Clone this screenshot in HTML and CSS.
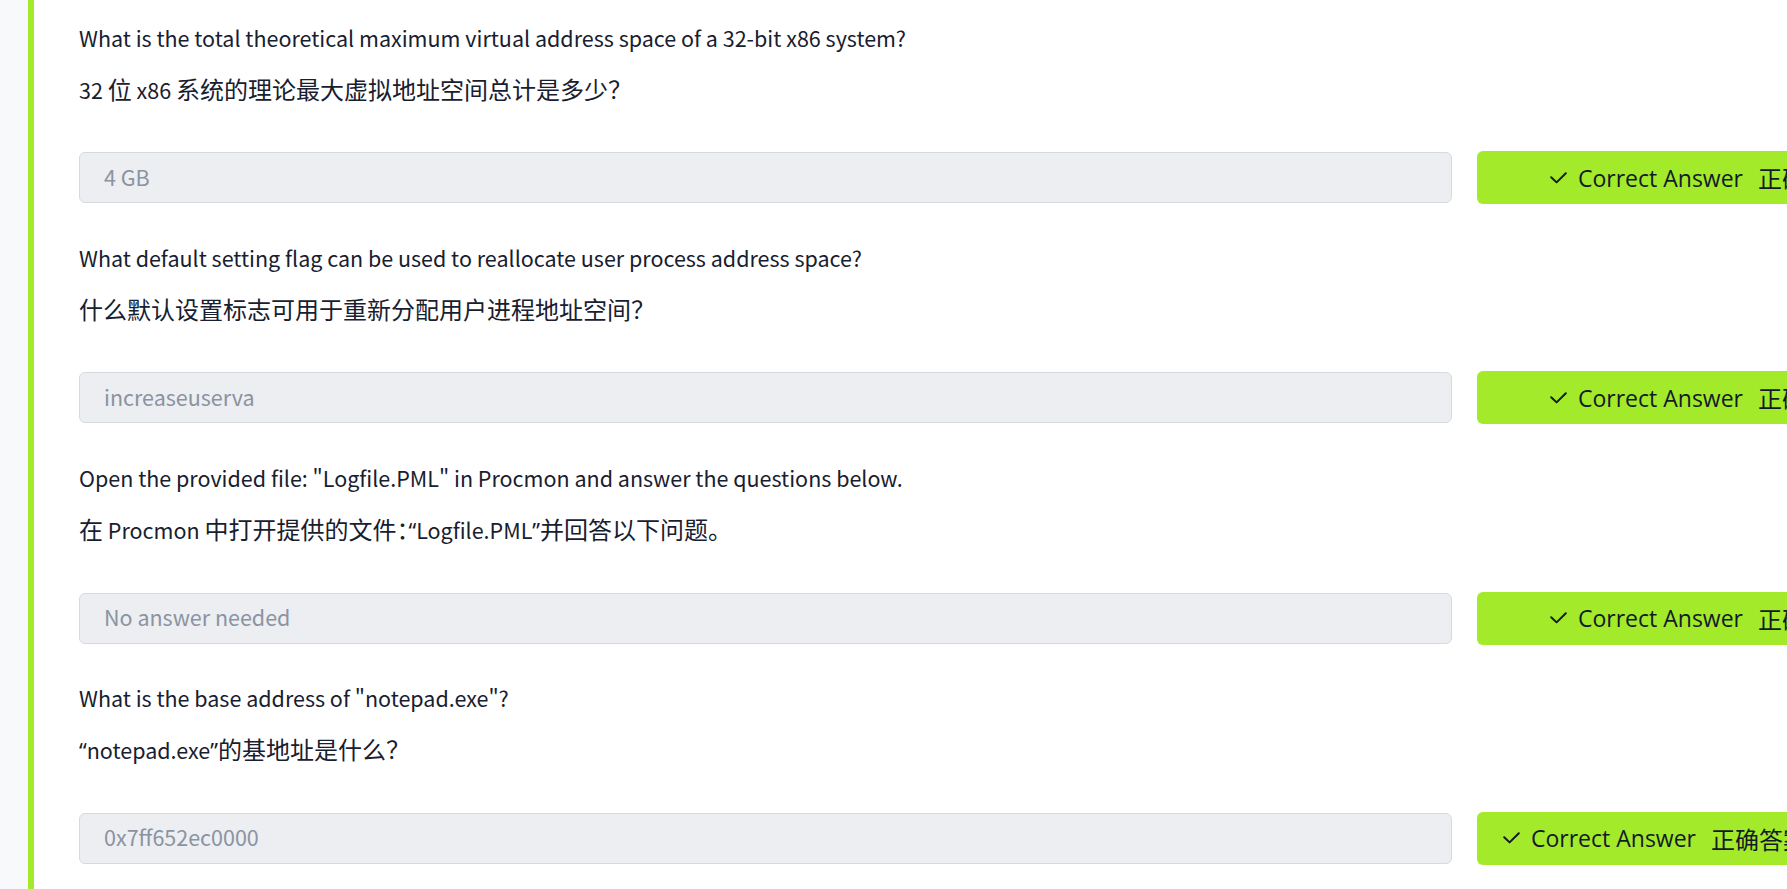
FILE: index.html
```html
<!DOCTYPE html>
<html lang="zh-CN">
<head>
<meta charset="utf-8">
<title>Tasks</title>
<link rel="stylesheet" href="styles.css">
</head>
<body>
<div class="page">
  <aside class="rail"></aside>
  <main class="tasks">
    <section class="task">
      <p class="q-en">What is the total theoretical maximum virtual address space of a 32-bit x86 system?</p>
      <p class="q-zh"><span class="lat">32 </span>位<span class="lat"> x86 </span>系统的理论最大虚拟地址空间总计是多少<span class="hw">？</span></p>
      <div class="answer-row">
        <div class="answer-field">4 GB</div>
        <div class="btn-correct">
          <svg class="check" width="17" height="12" viewBox="0 0 17 12"><path d="M1.2 5.2 L6.6 10.4 L15.8 1.2" fill="none" stroke="#141a28" stroke-width="2" stroke-linecap="round" stroke-linejoin="round"/></svg>
          <span>Correct Answer</span><span class="zh">正确答案</span>
        </div>
      </div>
    </section>
    <section class="task">
      <p class="q-en">What default setting flag can be used to reallocate user process address space?</p>
      <p class="q-zh">什么默认设置标志可用于重新分配用户进程地址空间<span class="hw">？</span></p>
      <div class="answer-row">
        <div class="answer-field">increaseuserva</div>
        <div class="btn-correct">
          <svg class="check" width="17" height="12" viewBox="0 0 17 12"><path d="M1.2 5.2 L6.6 10.4 L15.8 1.2" fill="none" stroke="#141a28" stroke-width="2" stroke-linecap="round" stroke-linejoin="round"/></svg>
          <span>Correct Answer</span><span class="zh">正确答案</span>
        </div>
      </div>
    </section>
    <section class="task">
      <p class="q-en">Open the provided file: "Logfile.PML" in Procmon and answer the questions below.</p>
      <p class="q-zh">在<span class="lat"> Procmon </span>中打开提供的文件<span class="hw">：</span><span class="pq">“</span><span class="lat">Logfile.PML</span><span class="pq">”</span>并回答以下问题。</p>
      <div class="answer-row">
        <div class="answer-field">No answer needed</div>
        <div class="btn-correct">
          <svg class="check" width="17" height="12" viewBox="0 0 17 12"><path d="M1.2 5.2 L6.6 10.4 L15.8 1.2" fill="none" stroke="#141a28" stroke-width="2" stroke-linecap="round" stroke-linejoin="round"/></svg>
          <span>Correct Answer</span><span class="zh">正确答案</span>
        </div>
      </div>
    </section>
    <section class="task">
      <p class="q-en">What is the base address of "notepad.exe"?</p>
      <p class="q-zh"><span class="pq">“</span><span class="lat">notepad.exe</span><span class="pq">”</span>的基地址是什么<span class="hw">？</span></p>
      <div class="answer-row">
        <div class="answer-field">0x7ff652ec0000</div>
        <div class="btn-correct btn-narrow">
          <svg class="check" width="17" height="12" viewBox="0 0 17 12"><path d="M1.2 5.2 L6.6 10.4 L15.8 1.2" fill="none" stroke="#141a28" stroke-width="2" stroke-linecap="round" stroke-linejoin="round"/></svg>
          <span>Correct Answer</span><span class="zh">正确答案</span>
        </div>
      </div>
    </section>
  </main>
</div>
</body>
</html>
```

FILE: styles.css
```css
html, body {
  margin: 0;
  height: 100%;
  overflow: hidden;
  background: #ffffff;
}

.page {
  display: flex;
  height: 100vh;
}

.rail {
  width: 28px;
  flex-shrink: 0;
  background: #f8f9fb;
}

.tasks {
  flex: 1;
  min-width: 0;
  overflow: hidden;
  border-left: 6px solid #a3ea2a;
  padding: 19.5px 0 0 45px;
  display: flex;
  flex-direction: column;
  gap: 35.83px;
}

.task {
  display: flex;
  flex-direction: column;
}

.task p {
  margin: 0;
  font-family: "Noto Sans CJK SC", sans-serif;
  line-height: 36px;
  color: #18202f;
  white-space: nowrap;
}

.task .q-en {
  font-size: 21.5px;
}

.task .q-zh {
  margin-top: 15px;
  height: 37px;
  font-size: 24px;
}

.lat {
  font-size: 21.5px;
  line-height: 1;
}

.pq {
  font-family: "Noto Sans", sans-serif;
  font-size: 21.5px;
  line-height: 1;
}

.hw {
  font-feature-settings: "halt" 1;
}

.answer-row {
  margin-top: 43.5px;
  height: 53px;
  display: grid;
  grid-template-columns: 1373px 360px;
  column-gap: 25px;
  align-items: center;
}

.answer-field {
  height: 51px;
  box-sizing: border-box;
  border: 1px solid #d5d9e0;
  border-radius: 6px;
  background: #eceef2;
  padding: 0 24px 3px;
  display: flex;
  align-items: center;
  font-family: "Noto Sans CJK SC", sans-serif;
  font-size: 21.5px;
  color: #8b93a1;
}

.btn-correct {
  height: 53px;
  box-sizing: border-box;
  border-radius: 6px;
  background: #a3ea2a;
  display: flex;
  align-items: center;
  padding-left: 73px;
  font-family: "Open Sans", sans-serif;
  font-size: 23px;
  color: #141a28;
  white-space: nowrap;
}

.btn-narrow {
  padding-left: 26px;
}

.btn-correct .check {
  flex-shrink: 0;
  margin-right: 11px;
}

.btn-correct .zh {
  margin-left: 15px;
  font-family: "Noto Sans CJK SC", sans-serif;
  font-size: 24px;
}
```
